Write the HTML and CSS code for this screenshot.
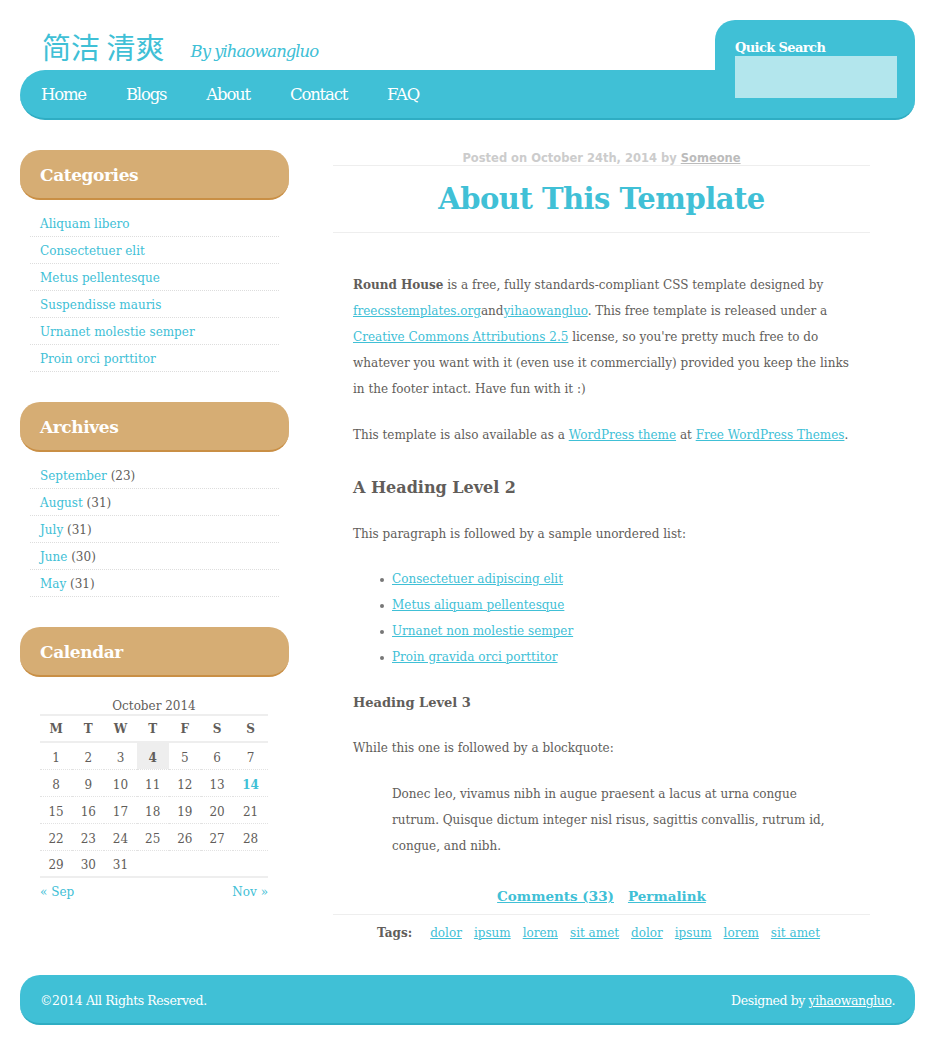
FILE: index.html
```html
<!DOCTYPE html>
<html lang="en">
<head>
<meta charset="utf-8">
<title>简洁 清爽 - About This Template</title>
<link rel="stylesheet" href="styles.css">
</head>
<body>
<div class="page">
  <header class="header">
    <div class="logo">
      <h1 class="logo-title">简洁 清爽</h1>
      <span class="logo-by">By yihaowangluo</span>
    </div>
    <nav class="nav">
      <a href="#">Home</a>
      <a href="#">Blogs</a>
      <a href="#">About</a>
      <a href="#">Contact</a>
      <a href="#">FAQ</a>
    </nav>
    <form class="search">
      <label class="search-label">Quick Search</label>
      <input class="search-input" type="text">
    </form>
  </header>

  <div class="columns">
    <aside class="sidebar">
      <section class="widget">
        <h2 class="widget-title">Categories</h2>
        <ul class="widget-list">
          <li><a href="#">Aliquam libero</a></li>
          <li><a href="#">Consectetuer elit</a></li>
          <li><a href="#">Metus pellentesque</a></li>
          <li><a href="#">Suspendisse mauris</a></li>
          <li><a href="#">Urnanet molestie semper</a></li>
          <li><a href="#">Proin orci porttitor</a></li>
        </ul>
      </section>
      <section class="widget">
        <h2 class="widget-title">Archives</h2>
        <ul class="widget-list">
          <li><a href="#">September</a> (23)</li>
          <li><a href="#">August</a> (31)</li>
          <li><a href="#">July</a> (31)</li>
          <li><a href="#">June</a> (30)</li>
          <li><a href="#">May</a> (31)</li>
        </ul>
      </section>
      <section class="widget">
        <h2 class="widget-title">Calendar</h2>
        <div class="calendar">
          <div class="cal-caption">October 2014</div>
          <table class="cal-table">
            <thead>
              <tr><th>M</th><th>T</th><th>W</th><th>T</th><th>F</th><th>S</th><th>S</th></tr>
            </thead>
            <tbody>
              <tr><td>1</td><td>2</td><td>3</td><td class="today">4</td><td>5</td><td>6</td><td>7</td></tr>
              <tr><td>8</td><td>9</td><td>10</td><td>11</td><td>12</td><td>13</td><td class="linked"><a href="#">14</a></td></tr>
              <tr><td>15</td><td>16</td><td>17</td><td>18</td><td>19</td><td>20</td><td>21</td></tr>
              <tr><td>22</td><td>23</td><td>24</td><td>25</td><td>26</td><td>27</td><td>28</td></tr>
              <tr class="last"><td>29</td><td>30</td><td>31</td><td></td><td></td><td></td><td></td></tr>
            </tbody>
          </table>
          <div class="cal-nav">
            <a href="#">« Sep</a>
            <a href="#">Nov »</a>
          </div>
        </div>
      </section>
    </aside>

    <main class="main">
      <article class="post">
        <p class="post-meta">Posted on October 24th, 2014 by <a href="#">Someone</a></p>
        <h2 class="post-title">About This Template</h2>
        <div class="post-body">
          <p><strong>Round House</strong> is a free, fully standards-compliant CSS template designed by <a href="#">freecsstemplates.org</a>and<a href="#">yihaowangluo</a>. This free template is released under a <a href="#">Creative Commons Attributions 2.5</a> license, so you're pretty much free to do whatever you want with it (even use it commercially) provided you keep the links in the footer intact. Have fun with it :)</p>
          <p>This template is also available as a <a href="#">WordPress theme</a> at <a href="#">Free WordPress Themes</a>.</p>
          <h3 class="h-level2">A Heading Level 2</h3>
          <p>This paragraph is followed by a sample unordered list:</p>
          <ul class="bullets">
            <li><a href="#">Consectetuer adipiscing elit</a></li>
            <li><a href="#">Metus aliquam pellentesque</a></li>
            <li><a href="#">Urnanet non molestie semper</a></li>
            <li><a href="#">Proin gravida orci porttitor</a></li>
          </ul>
          <h4 class="h-level3">Heading Level 3</h4>
          <p>While this one is followed by a blockquote:</p>
          <blockquote class="quote">
            <p>Donec leo, vivamus nibh in augue praesent a lacus at urna congue rutrum. Quisque dictum integer nisl risus, sagittis convallis, rutrum id, congue, and nibh.</p>
          </blockquote>
        </div>
        <p class="post-links"><a href="#">Comments (33)</a><a href="#">Permalink</a></p>
        <p class="post-tags"><strong>Tags:</strong><a href="#">dolor</a><a href="#">ipsum</a><a href="#">lorem</a><a href="#">sit amet</a><a href="#">dolor</a><a href="#">ipsum</a><a href="#">lorem</a><a href="#">sit amet</a></p>
      </article>
    </main>
  </div>

  <footer class="footer">
    <p>©2014 All Rights Reserved.</p>
    <p>Designed by <a href="#">yihaowangluo</a>.</p>
  </footer>
</div>
</body>
</html>
```

FILE: styles.css
```css
* { box-sizing: border-box; }

body {
  margin: 0;
  background: #fff;
  color: #615d5a;
  font-family: "DejaVu Serif", Georgia, serif;
  font-size: 12px;
}

a { color: #40c0d6; }

.page {
  width: 895px;
  margin: 0 auto;
}

/* Header */
.header {
  position: relative;
  padding-top: 20px;
}

.logo {
  height: 50px;
  display: flex;
  align-items: flex-end;
  padding-left: 22px;
  padding-bottom: 6px;
}

.logo-title {
  margin: 0;
  font-family: "Noto Sans CJK SC", sans-serif;
  font-weight: 400;
  font-size: 29px;
  line-height: 36px;
  color: #40c0d6;
}

.logo-by {
  margin-left: 26px;
  margin-bottom: 3px;
  font-style: italic;
  font-size: 16.5px;
  letter-spacing: -1px;
  color: #40c0d6;
}

.nav {
  height: 50px;
  background: #40c0d6;
  border-radius: 25px;
  border-bottom: 2px solid #2fadc3;
  display: flex;
  align-items: center;
  gap: 40px;
  padding-left: 21px;
}

.nav a {
  color: #fff;
  text-decoration: none;
  font-size: 16.5px;
  letter-spacing: -1.2px;
}

.search {
  position: absolute;
  top: 20px;
  right: 0;
  width: 200px;
  height: 100px;
  margin: 0;
  background: #40c0d6;
  border-radius: 20px 20px 20px 0;
  border-bottom: 2px solid #2fadc3;
  padding: 20px 18px 0 20px;
}

.search-label {
  display: block;
  color: #fff;
  font-weight: bold;
  font-size: 13px;
  letter-spacing: -0.6px;
  line-height: 16px;
}

.search-input {
  display: block;
  width: 162px;
  height: 42px;
  margin-top: 0;
  border: 0;
  background: #b3e6ed;
}

/* Columns */
.columns {
  display: flex;
  align-items: flex-start;
  gap: 44px;
  padding-top: 30px;
}

.sidebar {
  width: 269px;
  flex: none;
}

.widget { margin-bottom: 30px; }

.widget-title {
  margin: 0;
  height: 50px;
  line-height: 50px;
  padding-left: 20px;
  background: #d6ad74;
  border-radius: 20px;
  border-bottom: 2px solid #c98f45;
  color: #fff;
  font-size: 17px;
  font-weight: bold;
  letter-spacing: -0.4px;
}

.widget-list {
  list-style: none;
  margin: 0 10px;
  padding: 10px 0 0;
}

.widget-list li {
  height: 27px;
  line-height: 26px;
  padding: 1px 0 0 10px;
  border-bottom: 1px dotted #ddd;
}

.widget-list a { text-decoration: none; }

/* Calendar */
.calendar {
  padding: 21px 21px 0 20px;
}

.cal-caption {
  text-align: center;
  line-height: 16px;
}

.cal-table {
  width: 228px;
  border-collapse: collapse;
  border-top: 2px solid #eee;
  border-bottom: 2px solid #eee;
}

.cal-table th {
  height: 27px;
  font-weight: bold;
  border-bottom: 2px solid #eee;
  text-align: center;
}

.cal-table td {
  height: 27px;
  padding-top: 5px;
  text-align: center;
  border-bottom: 1px dotted #e2e2e2;
}

.cal-table tr.last td { border-bottom: 0; }

.cal-table td.today {
  background: #eee;
  font-weight: bold;
}

.cal-table td.linked a {
  font-weight: bold;
  text-decoration: none;
}

.cal-nav {
  display: flex;
  justify-content: space-between;
  padding-top: 7px;
}

.cal-nav a { text-decoration: none; }

/* Main */
.main {
  width: 537px;
  flex: none;
  padding-top: 1px;
}

.post-meta {
  margin: 0;
  padding-top: 1px;
  text-align: center;
  font-family: "DejaVu Sans", Verdana, sans-serif;
  font-weight: bold;
  font-size: 11.5px;
  line-height: 13px;
  color: #ccc;
  border-bottom: 1px solid #eee;
}

.post-meta a { color: #bbb; }

.post-title {
  margin: 0;
  height: 67px;
  line-height: 66px;
  text-align: center;
  font-size: 29px;
  font-weight: bold;
  color: #40c0d6;
  letter-spacing: -0.5px;
  border-bottom: 1px solid #eee;
}

.post-body {
  padding: 39px 20px 0;
  line-height: 26px;
}

.post-body p { margin: 0 0 20px; }

.h-level2 {
  margin: 27px 0 20px;
  font-size: 16px;
  line-height: 26px;
  font-weight: bold;
}

.bullets {
  margin: -1px 0 20px;
  padding-left: 39px;
  list-style: none;
}

.bullets li {
  position: relative;
}

.bullets li::before {
  content: "";
  position: absolute;
  left: -12px;
  top: 12px;
  width: 4px;
  height: 4px;
  border-radius: 50%;
  background: #777;
}

.h-level3 {
  margin: 0 0 19px;
  font-size: 13px;
  line-height: 26px;
  font-weight: bold;
}

.quote {
  margin: 0 20px 0 39px;
}

.post-links {
  margin: 0;
  padding: 4px 0 5px;
  text-align: center;
  font-weight: bold;
  font-size: 13.5px;
  line-height: 26px;
  border-bottom: 1px solid #eee;
}

.post-links a { margin: 0 7px; }

.post-tags {
  margin: 0;
  padding-top: 5px;
  text-align: center;
  line-height: 26px;
}

.post-tags strong { margin-right: 12px; }
.post-tags a { margin: 0 6px; }

/* Footer */
.footer {
  margin-top: 29px;
  height: 50px;
  background: #40c0d6;
  border-radius: 20px;
  border-bottom: 2px solid #2fadc3;
  display: flex;
  justify-content: space-between;
  align-items: center;
  padding: 3px 20px 0;
  color: #fff;
}

.footer p { margin: 0; font-size: 12.5px; letter-spacing: -0.4px; }
.footer a { color: #fff; }
```
